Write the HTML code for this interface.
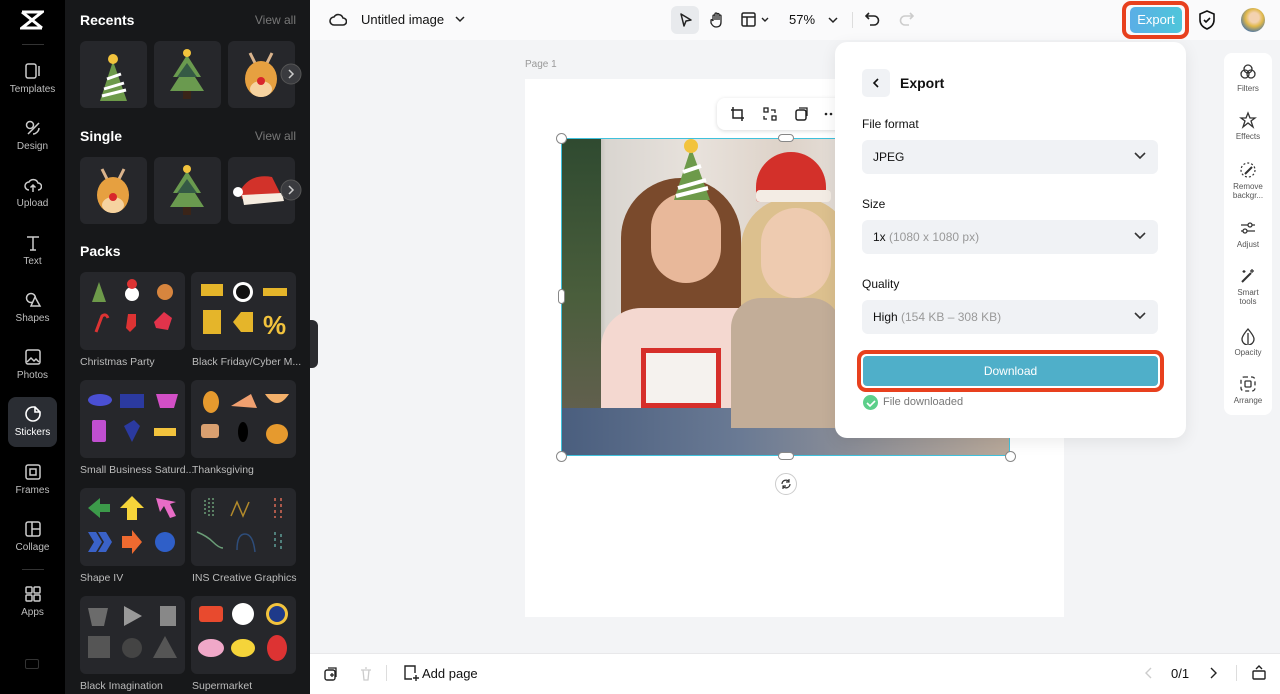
<!DOCTYPE html>
<html><head><meta charset="utf-8">
<style>
*{box-sizing:border-box;margin:0;padding:0}
body{width:1280px;height:694px;overflow:hidden;font-family:"Liberation Sans",sans-serif;background:#f3f4f6;position:relative}
.abs{position:absolute}
.rail{left:0;top:0;width:65px;height:694px;background:#000}
.ri{position:absolute;left:0;width:65px;text-align:center;color:#bfbfbf;font-size:10px}
.ri svg{display:block;margin:0 auto 4px}
.panel{left:65px;top:0;width:245px;height:694px;background:#17181a}
.h{position:absolute;left:80px;color:#fff;font-weight:bold;font-size:14px}
.va{position:absolute;right:984px;color:#777;font-size:12px}
.tile{position:absolute;width:67px;height:67px;background:#26272b;border-radius:6px}
.pk{position:absolute;width:105px;height:78px;background:#26272b;border-radius:6px}
.pl{position:absolute;color:#bbb;font-size:10.5px;white-space:nowrap}
.top{left:310px;top:0;width:970px;height:40px;background:#fafafb}
.bot{left:310px;top:653px;width:970px;height:41px;background:#fff;border-top:1px solid #e8e8ea}
.ep{left:835px;top:42px;width:351px;height:396px;background:#fff;border-radius:12px;box-shadow:0 4px 16px rgba(0,0,0,.08)}
.lab{position:absolute;left:27px;font-size:12px;color:#111;font-weight:500}
.sel{position:absolute;left:27px;width:296px;height:34px;background:#f0f2f5;border-radius:6px;font-size:12px;color:#111;padding:10px 11px}
.sel .g{color:#999}
.chev{position:absolute;right:12px;top:11px}
.rt{left:1224px;top:53px;width:48px;height:362px;background:#fff;border-radius:8px}
.rti{position:absolute;left:0;width:48px;text-align:center;font-size:8px;color:#555;line-height:9px}
.rti svg{display:block;margin:0 auto 3px}
</style></head><body>

<div class="abs rail">
  <svg class="abs" style="left:20px;top:10px" width="24" height="20" viewBox="0 0 24 20"><path d="M2 2h20L2 18h20M2 2l20 16" stroke="#fff" stroke-width="3" fill="none"/></svg>
  <div class="abs" style="left:22px;top:44px;width:22px;height:1px;background:#333"></div>
  <div class="ri" style="top:62px"><svg width="18" height="18"><rect x="2" y="2" width="10" height="14" rx="2" stroke="#ccc" fill="none" stroke-width="1.5"/><path d="M15 4v10" stroke="#ccc" stroke-width="1.5"/></svg>Templates</div>
  <div class="ri" style="top:119px"><svg width="18" height="18"><circle cx="6" cy="6" r="3.5" stroke="#ccc" fill="none" stroke-width="1.5"/><path d="M4 15L15 4M9 15c3 0 6-3 6-6" stroke="#ccc" fill="none" stroke-width="1.5"/></svg>Design</div>
  <div class="ri" style="top:176px"><svg width="18" height="18"><path d="M5 14a4 4 0 010-8 5 5 0 019 1 3.5 3.5 0 010 7M9 16V9M6.5 11.5L9 9l2.5 2.5" stroke="#ccc" fill="none" stroke-width="1.5"/></svg>Upload</div>
  <div class="ri" style="top:234px"><svg width="18" height="18"><path d="M3 3h12M9 3v13M6 16h6" stroke="#ccc" fill="none" stroke-width="1.5"/></svg>Text</div>
  <div class="ri" style="top:291px"><svg width="18" height="18"><circle cx="7" cy="7" r="4.5" stroke="#ccc" fill="none" stroke-width="1.5"/><path d="M11 6l5 9H7z" stroke="#ccc" fill="#000" stroke-width="1.5"/></svg>Shapes</div>
  <div class="ri" style="top:348px"><svg width="18" height="18"><rect x="2" y="2" width="14" height="14" rx="2" stroke="#ccc" fill="none" stroke-width="1.5"/><path d="M3 14l4-4 3 3 2-2 3 3" stroke="#ccc" fill="none" stroke-width="1.5"/></svg>Photos</div>
  <div class="abs" style="left:8px;top:397px;width:49px;height:50px;background:#2a2d33;border-radius:8px"></div>
  <div class="ri" style="top:405px;color:#fff"><svg width="18" height="18"><path d="M16 9a7 7 0 11-7-7h2l5 5z M11 2v5h5" stroke="#fff" fill="none" stroke-width="1.6"/></svg>Stickers</div>
  <div class="ri" style="top:463px"><svg width="18" height="18"><rect x="2" y="2" width="14" height="14" rx="2" stroke="#ccc" fill="none" stroke-width="1.5"/><rect x="6" y="6" width="6" height="6" stroke="#ccc" fill="none" stroke-width="1.5"/></svg>Frames</div>
  <div class="ri" style="top:520px"><svg width="18" height="18"><rect x="2" y="2" width="14" height="14" rx="2" stroke="#ccc" fill="none" stroke-width="1.5"/><path d="M8 2v14M8 9h8" stroke="#ccc" stroke-width="1.5"/></svg>Collage</div>
  <div class="abs" style="left:22px;top:569px;width:22px;height:1px;background:#333"></div>
  <div class="ri" style="top:585px"><svg width="18" height="18"><rect x="2" y="2" width="6" height="6" rx="1" stroke="#ccc" fill="none" stroke-width="1.5"/><rect x="10" y="2" width="6" height="6" rx="1" stroke="#ccc" fill="none" stroke-width="1.5"/><rect x="2" y="10" width="6" height="6" rx="1" stroke="#ccc" fill="none" stroke-width="1.5"/><rect x="10" y="10" width="6" height="6" rx="1" stroke="#ccc" fill="none" stroke-width="1.5"/></svg>Apps</div>
  <div class="abs" style="left:25px;top:659px;width:14px;height:10px;border:1.5px solid #333;border-radius:2px"></div>
</div>

<div class="abs panel"></div>
<div class="h" style="top:12px">Recents</div><div class="va" style="top:13px">View all</div>
<div class="tile" style="left:80px;top:41px"></div><div class="tile" style="left:154px;top:41px"></div><div class="tile" style="left:228px;top:41px"></div>
<div class="h" style="top:128px">Single</div><div class="va" style="top:129px">View all</div>
<div class="tile" style="left:80px;top:157px"></div><div class="tile" style="left:154px;top:157px"></div><div class="tile" style="left:228px;top:157px"></div>
<svg class="abs" style="left:80px;top:41px" width="230" height="183">
 <g><path d="M33 20L20 60h27z" fill="#6d9a4a"/><path d="M24 48l20-6M22 55l24-6M27 38l14-5" stroke="#fff" stroke-width="3"/><circle cx="33" cy="18" r="5" fill="#f2c33d"/></g>
 <g transform="translate(74,0)"><path d="M33 14l-14 22h6l-9 14h34l-9-14h6z" fill="#6a9a4f"/><path d="M33 22l-10 14h20z" fill="#355a45"/><rect x="29" y="50" width="8" height="8" fill="#3a2418"/><circle cx="33" cy="12" r="4" fill="#f2c33d"/></g>
 <g transform="translate(148,0)"><path d="M22 12l6 12M44 12l-6 12" stroke="#d9b38c" stroke-width="3"/><ellipse cx="33" cy="38" rx="16" ry="18" fill="#e6a040"/><ellipse cx="33" cy="48" rx="11" ry="8" fill="#f6d3a0"/><circle cx="33" cy="40" r="4" fill="#d8262b"/></g>
 <g transform="translate(0,116)"><path d="M22 12l6 12M44 12l-6 12" stroke="#d9b38c" stroke-width="3"/><ellipse cx="33" cy="38" rx="16" ry="18" fill="#e6a040"/><ellipse cx="33" cy="48" rx="11" ry="8" fill="#f6d3a0"/><circle cx="33" cy="40" r="4" fill="#d8262b"/></g>
 <g transform="translate(74,116)"><path d="M33 14l-14 22h6l-9 14h34l-9-14h6z" fill="#6a9a4f"/><path d="M33 22l-10 14h20z" fill="#355a45"/><rect x="29" y="50" width="8" height="8" fill="#3a2418"/><circle cx="33" cy="12" r="4" fill="#f2c33d"/></g>
 <g transform="translate(148,116)"><path d="M12 34q10-18 32-14l10 20q-20-6-40 2z" fill="#d2322a"/><path d="M14 38l40-2 2 8-40 4z" fill="#f5ece0"/><circle cx="10" cy="35" r="5" fill="#fff"/></g>
 <circle cx="211" cy="33" r="10" fill="#3a3b3f" stroke="#555"/><path d="M209 29l4 4-4 4" stroke="#ccc" fill="none" stroke-width="1.5"/>
 <circle cx="211" cy="149" r="10" fill="#3a3b3f" stroke="#555"/><path d="M209 145l4 4-4 4" stroke="#ccc" fill="none" stroke-width="1.5"/>
</svg>
<div class="h" style="top:243px">Packs</div>
<div class="pk" style="left:80px;top:272px"></div><div class="pk" style="left:191px;top:272px"></div>
<div class="pl" style="left:80px;top:356px">Christmas Party</div><div class="pl" style="left:192px;top:356px">Black Friday/Cyber M...</div>
<div class="pk" style="left:80px;top:380px"></div><div class="pk" style="left:191px;top:380px"></div>
<div class="pl" style="left:80px;top:464px">Small Business Saturd...</div><div class="pl" style="left:192px;top:464px">Thanksgiving</div>
<div class="pk" style="left:80px;top:488px"></div><div class="pk" style="left:191px;top:488px"></div>
<div class="pl" style="left:80px;top:572px">Shape IV</div><div class="pl" style="left:192px;top:572px">INS Creative Graphics</div>
<div class="pk" style="left:80px;top:596px"></div><div class="pk" style="left:191px;top:596px"></div>
<div class="pl" style="left:80px;top:680px">Black Imagination</div><div class="pl" style="left:192px;top:680px">Supermarket</div>
<svg class="abs" style="left:80px;top:272px" width="216" height="402">
 <g><path d="M19 10l-7 20h14z" fill="#6d9a4a"/><circle cx="52" cy="22" r="7" fill="#fff"/><circle cx="52" cy="12" r="5" fill="#d33"/><circle cx="85" cy="20" r="8" fill="#d7853e"/>
 <path d="M16 60l6-16q4-3 6 2" stroke="#d33" stroke-width="3" fill="none"/><path d="M48 42h8v12l-6 6-4-4z" fill="#d33"/><path d="M74 50l10-10 8 6-4 12-12-2z" fill="#e2334b"/></g>
 <g transform="translate(111,0)"><rect x="10" y="12" width="22" height="12" fill="#e5b52a"/><circle cx="52" cy="20" r="10" fill="#fff"/><circle cx="52" cy="20" r="7" fill="#111"/><rect x="72" y="16" width="24" height="8" fill="#e5b52a"/>
 <rect x="12" y="38" width="18" height="24" fill="#e5b52a"/><path d="M42 50l8-10h12v20H50z" fill="#e5b52a"/><text x="72" y="62" font-size="26" fill="#f2c33d" font-weight="bold" font-family="Liberation Sans">%</text></g>
 <g transform="translate(0,108)"><ellipse cx="20" cy="20" rx="12" ry="6" fill="#4a4fd3"/><rect x="40" y="14" width="24" height="14" fill="#2b3aa0"/><path d="M76 14h22l-4 14H80z" fill="#d24fc6"/>
 <rect x="12" y="40" width="14" height="22" rx="2" fill="#c04fd0"/><path d="M44 46l10-6 6 6-8 16z" fill="#2b3aa0"/><rect x="74" y="48" width="22" height="8" fill="#f2c33d"/></g>
 <g transform="translate(111,108)"><ellipse cx="20" cy="22" rx="8" ry="11" fill="#e69a2e"/><path d="M40 26l20-12 6 14z" fill="#f0a070"/><path d="M74 14q12 18 24 0z" fill="#f3b06a"/>
 <rect x="10" y="44" width="18" height="14" rx="3" fill="#d9a070"/><ellipse cx="52" cy="52" rx="5" ry="10" fill="#000"/><ellipse cx="86" cy="54" rx="11" ry="10" fill="#e69a2e"/></g>
 <g transform="translate(0,216)"><path d="M8 20l12-10v6h10v8H20v6z" fill="#3c9a4a"/><path d="M52 8l12 12h-7v12h-10V20h-7z" fill="#f5d43a"/><path d="M76 10l20 4-6 2 6 12-6 2-6-12-4 6z" fill="#e86cc6"/>
 <path d="M8 44h8l6 10-6 10H8l6-10z M18 44h8l6 10-6 10h-8l6-10z" fill="#3a62c8"/><path d="M42 48h10v-6l10 12-10 12v-6H42z" fill="#ee6a30"/><circle cx="85" cy="54" r="10" fill="#2f5fc8"/></g>
 <g transform="translate(111,216)" stroke-width="1.5" fill="none"><path d="M18 10v20M22 10v20M14 12v16" stroke="#6b9e78" stroke-dasharray="2 2"/><path d="M40 28l6-14 6 14 6-14" stroke="#b28a2b"/><path d="M84 10v20M90 10v20" stroke="#d96a56" stroke-dasharray="3 3"/>
 <path d="M6 44q10 4 16 10t10 6" stroke="#6b9e78"/><path d="M46 62q0-16 8-16t10 18" stroke="#2e4d7a"/><path d="M84 44v18M90 46v16" stroke="#5f9e98" stroke-dasharray="3 3"/></g>
 <g transform="translate(0,324)"><path d="M8 12h20l-4 18H12z" fill="#6b6b6b"/><path d="M44 10l18 10-18 10z" fill="#999"/><rect x="80" y="10" width="16" height="20" fill="#888"/>
 <rect x="8" y="40" width="22" height="22" fill="#555"/><circle cx="52" cy="52" r="10" fill="#444"/><path d="M85 40l12 22H73z" fill="#555"/></g>
 <g transform="translate(111,324)"><rect x="8" y="10" width="24" height="16" rx="3" fill="#e84a2e"/><circle cx="52" cy="18" r="11" fill="#fff"/><circle cx="86" cy="18" r="11" fill="#f2c33d"/><circle cx="86" cy="18" r="8" fill="#1e3a8a"/>
 <ellipse cx="20" cy="52" rx="13" ry="9" fill="#f0a8c8"/><ellipse cx="52" cy="52" rx="12" ry="9" fill="#f5d43a"/><ellipse cx="86" cy="52" rx="10" ry="13" fill="#d33"/></g>
</svg>
<div class="abs" style="left:310px;top:320px;width:8px;height:48px;background:#2a2b2f;border-radius:0 6px 6px 0"></div>

<div class="abs top"></div>
<svg class="abs" style="left:329px;top:11px" width="18" height="18"><path d="M5 14a4 4 0 010-8 5 5 0 019 1 3.5 3.5 0 010 7z" stroke="#222" fill="none" stroke-width="1.6"/></svg>
<div class="abs" style="left:361px;top:12px;font-size:13px;color:#111;font-weight:500">Untitled image</div>
<svg class="abs" style="left:455px;top:15px" width="10" height="8"><path d="M1 2l4 4 4-4" stroke="#222" fill="none" stroke-width="1.5"/></svg>
<div class="abs" style="left:671px;top:6px;width:28px;height:28px;background:#e8eaed;border-radius:6px"></div>
<svg class="abs" style="left:678px;top:12px" width="16" height="16"><path d="M3 2l10 6-5 1-2 5z" stroke="#222" fill="none" stroke-width="1.5" stroke-linejoin="round"/></svg>
<svg class="abs" style="left:708px;top:11px" width="18" height="18"><path d="M5 10V5a1 1 0 012 0v4V3a1 1 0 012 0v6V3.5a1 1 0 012 0V9V5a1 1 0 012 0v6q0 5-5 5-3 0-5-4L3 9q1-1 2 1" stroke="#222" fill="none" stroke-width="1.3"/></svg>
<svg class="abs" style="left:741px;top:12px" width="30" height="16"><rect x="1" y="1" width="13" height="13" rx="1.5" stroke="#222" fill="none" stroke-width="1.5"/><path d="M1 5h13M6 5v9" stroke="#222" stroke-width="1.5"/><path d="M21 6l3 3 3-3" stroke="#222" fill="none" stroke-width="1.4"/></svg>
<div class="abs" style="left:789px;top:12px;font-size:13px;color:#111">57%</div>
<svg class="abs" style="left:828px;top:16px" width="10" height="8"><path d="M1 2l4 4 4-4" stroke="#222" fill="none" stroke-width="1.5"/></svg>
<div class="abs" style="left:852px;top:12px;width:1px;height:16px;background:#ddd"></div>
<svg class="abs" style="left:865px;top:11px" width="16" height="16"><path d="M4 2L1 5l3 3M1 5h8a4.5 4.5 0 010 9H5" stroke="#222" fill="none" stroke-width="1.6"/></svg>
<svg class="abs" style="left:898px;top:11px" width="16" height="16"><path d="M12 2l3 3-3 3M15 5H7a4.5 4.5 0 000 9h4" stroke="#ccc" fill="none" stroke-width="1.6"/></svg>
<div class="abs" style="left:1122px;top:1px;width:67px;height:38px;border:4px solid #e8401e;border-radius:9px"></div>
<div class="abs" style="left:1130px;top:7px;width:52px;height:26px;background:linear-gradient(90deg,#5aaee6,#4fc6da);border-radius:5px;color:#fff;font-size:13px;text-align:center;line-height:26px">Export</div>
<svg class="abs" style="left:1198px;top:10px" width="18" height="20"><path d="M9 1l7 3v6q0 6-7 9-7-3-7-9V4z" stroke="#111" fill="none" stroke-width="1.6"/><path d="M6 10l2 2 4-4" stroke="#111" fill="none" stroke-width="1.6"/></svg>
<div class="abs" style="left:1241px;top:8px;width:24px;height:24px;border-radius:50%;background:radial-gradient(circle at 55% 40%,#f3d2b0 25%,#e0b84a 45%,#3e6fae 80%)"></div>

<div class="abs" style="left:525px;top:59px;font-size:10px;color:#999">Page 1</div>
<div class="abs" style="left:525px;top:79px;width:539px;height:538px;background:#fff"></div>
<div class="abs" style="left:561px;top:138px;width:449px;height:318px;overflow:hidden;background:linear-gradient(90deg,#3d5a3a 0%,#7a7a6c 4%,#d9d5d0 10%,#e8e2dc 30%,#ddd2c8 50%,#e9e5e1 70%,#d8d4d0 100%)">
  <div class="abs" style="left:0;top:0;width:40px;height:318px;background:linear-gradient(180deg,#2f4a30,#4a5e3c 50%,#6b6055)"></div>
  <div class="abs" style="left:60px;top:40px;width:120px;height:180px;border-radius:60px 60px 30px 30px;background:#7a4a2c"></div>
  <div class="abs" style="left:90px;top:55px;width:70px;height:90px;border-radius:40px;background:#e8b89a"></div>
  <div class="abs" style="left:40px;top:170px;width:200px;height:150px;border-radius:40px 40px 0 0;background:#f4d8d0"></div>
  <div class="abs" style="left:80px;top:210px;width:80px;height:60px;background:#f5f2ee;border:5px solid #d62f2a"></div>
  <div class="abs" style="left:0;top:270px;width:449px;height:48px;background:linear-gradient(90deg,#4a5e7e,#6a7a94 40%,#b9a99a)"></div>
  <div class="abs" style="left:180px;top:60px;width:110px;height:200px;border-radius:50px 50px 20px 20px;background:#dcc08e"></div>
  <div class="abs" style="left:200px;top:70px;width:70px;height:90px;border-radius:40px;background:#eecbb0"></div>
  <div class="abs" style="left:195px;top:14px;width:70px;height:50px;border-radius:40px 40px 4px 4px;background:#d3302a"></div>
  <div class="abs" style="left:195px;top:52px;width:75px;height:12px;background:#f3ece4;border-radius:4px"></div>
  <div class="abs" style="left:170px;top:160px;width:110px;height:130px;background:#c2ad98;border-radius:30px 30px 0 0"></div>
  <svg class="abs" style="left:105px;top:0" width="50" height="65"><path d="M25 10L8 62h36z" fill="#6d9a4a"/><path d="M12 50l28-8M10 58l32-8M17 34l18-6" stroke="#fff" stroke-width="4"/><circle cx="25" cy="8" r="7" fill="#f2c33d"/></svg>
</div>
<div class="abs" style="left:561px;top:138px;width:449px;height:318px;border:1.5px solid #3fc1dc"></div>
<div class="abs" style="left:556px;top:133px;width:11px;height:11px;border-radius:50%;background:#fff;border:1px solid #888"></div>
<div class="abs" style="left:556px;top:451px;width:11px;height:11px;border-radius:50%;background:#fff;border:1px solid #888"></div>
<div class="abs" style="left:1005px;top:451px;width:11px;height:11px;border-radius:50%;background:#fff;border:1px solid #888"></div>
<div class="abs" style="left:778px;top:134px;width:16px;height:8px;border-radius:4px;background:#fff;border:1px solid #888"></div>
<div class="abs" style="left:778px;top:452px;width:16px;height:8px;border-radius:4px;background:#fff;border:1px solid #888"></div>
<div class="abs" style="left:558px;top:289px;width:7px;height:15px;border-radius:4px;background:#fff;border:1px solid #888"></div>
<div class="abs" style="left:775px;top:473px;width:22px;height:22px;border-radius:50%;background:#fff;border:1px solid #ccc"></div>
<svg class="abs" style="left:780px;top:478px" width="12" height="12"><path d="M2 6a4 4 0 017-2.5M10 6a4 4 0 01-7 2.5M9 1v3H6M3 11V8h3" stroke="#333" fill="none" stroke-width="1.2"/></svg>
<div class="abs" style="left:717px;top:98px;width:130px;height:32px;background:#fff;border-radius:8px;box-shadow:0 1px 4px rgba(0,0,0,.15)"></div>
<svg class="abs" style="left:730px;top:106px" width="110" height="16"><path d="M3 1v11h11M1 4h11v11" stroke="#222" fill="none" stroke-width="1.5"/><rect x="34" y="2" width="4" height="4" stroke="#222" fill="none" stroke-width="1.3"/><rect x="42" y="10" width="4" height="4" stroke="#222" fill="none" stroke-width="1.3"/><path d="M41 4h4v3M37 13h-3v-3" stroke="#222" fill="none" stroke-width="1.3"/><rect x="66" y="4" width="10" height="10" rx="2" stroke="#222" fill="none" stroke-width="1.5"/><path d="M69 2h8v8" stroke="#222" fill="none" stroke-width="1.3"/><circle cx="96" cy="8" r="1.3" fill="#222"/><circle cx="101" cy="8" r="1.3" fill="#222"/></svg>

<div class="abs ep">
  <div class="abs" style="left:27px;top:27px;width:28px;height:28px;background:#f0f2f5;border-radius:5px"></div>
  <svg class="abs" style="left:37px;top:36px" width="8" height="10"><path d="M6 1L2 5l4 4" stroke="#111" fill="none" stroke-width="1.6"/></svg>
  <div class="abs" style="left:65px;top:33px;font-size:14px;font-weight:bold;color:#111">Export</div>
  <div class="lab" style="top:75px">File format</div>
  <div class="sel" style="top:98px">JPEG<svg class="chev" width="12" height="10"><path d="M1 2l5 5 5-5" stroke="#333" fill="none" stroke-width="1.6"/></svg></div>
  <div class="lab" style="top:155px">Size</div>
  <div class="sel" style="top:178px">1x <span class="g">(1080 x 1080 px)</span><svg class="chev" width="12" height="10"><path d="M1 2l5 5 5-5" stroke="#333" fill="none" stroke-width="1.6"/></svg></div>
  <div class="lab" style="top:235px">Quality</div>
  <div class="sel" style="top:258px">High <span class="g">(154 KB – 308 KB)</span><svg class="chev" width="12" height="10"><path d="M1 2l5 5 5-5" stroke="#333" fill="none" stroke-width="1.6"/></svg></div>
  <div class="abs" style="left:22px;top:308px;width:307px;height:42px;border:4px solid #e8401e;border-radius:9px"></div>
  <div class="abs" style="left:28px;top:314px;width:295px;height:30px;background:#4fafc9;border-radius:4px;color:#fff;font-size:12px;text-align:center;line-height:30px">Download</div>
  <div class="abs" style="left:28px;top:353px;width:15px;height:15px;border-radius:50%;background:#5ccf8a"></div>
  <svg class="abs" style="left:31px;top:357px" width="10" height="8"><path d="M1 4l3 3 5-5" stroke="#fff" fill="none" stroke-width="1.6"/></svg>
  <div class="abs" style="left:48px;top:354px;font-size:11px;color:#777">File downloaded</div>
</div>

<div class="abs rt">
  <div class="rti" style="top:10px"><svg width="18" height="18"><circle cx="9" cy="6" r="4" stroke="#333" fill="none" stroke-width="1.3"/><circle cx="6" cy="11" r="4" stroke="#333" fill="none" stroke-width="1.3"/><circle cx="12" cy="11" r="4" stroke="#333" fill="none" stroke-width="1.3"/></svg>Filters</div>
  <div class="rti" style="top:58px"><svg width="18" height="18"><path d="M9 2l2 5h5l-4 3 2 6-5-4-5 4 2-6-4-3h5z" stroke="#333" fill="none" stroke-width="1.3"/></svg>Effects</div>
  <div class="rti" style="top:108px"><svg width="18" height="18"><circle cx="9" cy="9" r="7" stroke="#333" fill="none" stroke-width="1.2" stroke-dasharray="2 2"/><path d="M6 13l7-7" stroke="#333" stroke-width="2"/></svg>Remove<br>backgr...</div>
  <div class="rti" style="top:166px"><svg width="18" height="18"><path d="M2 6h14M2 12h14" stroke="#333" stroke-width="1.3"/><circle cx="11" cy="6" r="2" fill="#fff" stroke="#333" stroke-width="1.3"/><circle cx="6" cy="12" r="2" fill="#fff" stroke="#333" stroke-width="1.3"/></svg>Adjust</div>
  <div class="rti" style="top:214px"><svg width="18" height="18"><path d="M3 15l9-9" stroke="#333" stroke-width="2"/><path d="M13 2v4M11 4h4M5 3v3M3.5 4.5h3" stroke="#333" stroke-width="1.2"/></svg>Smart<br>tools</div>
  <div class="rti" style="top:274px"><svg width="18" height="18"><path d="M9 2q6 7 6 10a6 6 0 01-12 0q0-3 6-10z" stroke="#333" fill="none" stroke-width="1.3"/><path d="M9 6v11" stroke="#333" stroke-width="1.3"/></svg>Opacity</div>
  <div class="rti" style="top:322px"><svg width="18" height="18"><rect x="2" y="2" width="14" height="14" rx="3" stroke="#333" fill="none" stroke-width="1.3" stroke-dasharray="4 3"/><rect x="6" y="6" width="6" height="6" rx="1" stroke="#333" fill="none" stroke-width="1.3"/></svg>Arrange</div>
</div>

<div class="abs bot"></div>
<svg class="abs" style="left:323px;top:666px" width="16" height="16"><rect x="2" y="4" width="10" height="10" rx="2" stroke="#222" fill="none" stroke-width="1.4"/><path d="M5 2h8v9M7 9h4M9 7v4" stroke="#222" fill="none" stroke-width="1.3"/></svg>
<svg class="abs" style="left:358px;top:666px" width="16" height="16"><path d="M3 4h10M5 4l1 10h4l1-10M7 2h2" stroke="#ccc" fill="none" stroke-width="1.3"/></svg>
<div class="abs" style="left:386px;top:665px;width:1px;height:16px;background:#ddd"></div>
<svg class="abs" style="left:402px;top:664px" width="18" height="18"><path d="M10 15H3V2h10v7" stroke="#222" fill="none" stroke-width="1.4"/><path d="M14 11v6M11 14h6" stroke="#222" stroke-width="1.4"/></svg>
<div class="abs" style="left:422px;top:666px;font-size:13px;color:#111">Add page</div>
<svg class="abs" style="left:1144px;top:667px" width="10" height="12"><path d="M7 1L2 6l5 5" stroke="#ccc" fill="none" stroke-width="1.4"/></svg>
<div class="abs" style="left:1171px;top:666px;font-size:13px;color:#111">0/1</div>
<svg class="abs" style="left:1208px;top:667px" width="10" height="12"><path d="M3 1l5 5-5 5" stroke="#222" fill="none" stroke-width="1.4"/></svg>
<div class="abs" style="left:1236px;top:665px;width:1px;height:16px;background:#ddd"></div>
<svg class="abs" style="left:1251px;top:664px" width="16" height="16"><rect x="2" y="7" width="12" height="8" rx="1" stroke="#222" fill="none" stroke-width="1.4"/><path d="M5 5l3-3 3 3" stroke="#222" fill="none" stroke-width="1.4"/></svg>
</body></html>
